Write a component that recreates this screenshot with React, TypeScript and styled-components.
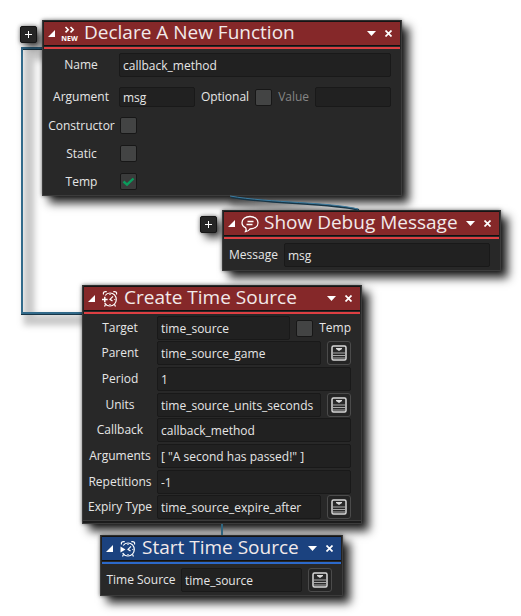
import React, { useId, useState } from 'react';
import styled, { createGlobalStyle } from 'styled-components';

const GlobalStyle = createGlobalStyle`
  *, *::before, *::after { box-sizing: border-box; }
  body {
    margin: 0;
    background: #ffffff;
    color: #e6e6e6;
    font: 12px/16px "Open Sans", "Noto Sans", sans-serif;
  }
  button, input { font: inherit; color: inherit; }
`;

type Tone = 'red' | 'blue';

const tones = {
  red: { fill: '#852829', line: '#dd3f42' },
  blue: { fill: '#1b427f', line: '#2c69ca' },
};

const Canvas = styled.main`
  position: relative;
  min-height: 100vh;
  overflow: hidden;
`;

const Wires = styled.svg`
  position: absolute;
  top: 0;
  left: 0;
  overflow: visible;
  pointer-events: none;
`;

const NodeFrame = styled.section<{ $x: number; $y: number; $width: number }>`
  position: absolute;
  left: ${(p) => p.$x}px;
  top: ${(p) => p.$y}px;
  width: ${(p) => p.$width}px;
  background: #282828;
  border: 1px solid #3b3b3b;
  border-top-color: #2c2e2e;
  box-shadow: 0 0 4px rgba(0, 0, 0, 0.55), 7px 7px 9px rgba(0, 0, 0, 0.85);
`;

const Header = styled.header<{ $tone: Tone }>`
  display: flex;
  align-items: center;
  height: 28px;
  padding-left: 4px;
  padding-right: 3px;
  background: linear-gradient(
    #141414 0 1px,
    ${(p) => tones[p.$tone].fill} 1px 24px,
    #101010 24px 25px,
    #282828 25px 26px,
    ${(p) => tones[p.$tone].line} 26px
  );
  border: 0 solid #222222;
  border-width: 0 1px;
`;

const Title = styled.h2`
  flex: 1;
  min-width: 0;
  margin: 0 0 6px 5px;
  color: #f2eaea;
  font-size: 19px;
  font-weight: 400;
  line-height: 22px;
  white-space: nowrap;
`;

const IconButton = styled.button<{ $width: number }>`
  display: grid;
  place-items: center;
  flex: none;
  width: ${(p) => p.$width}px;
  height: 23px;
  margin-bottom: 3px;
  padding: 0;
  border: 0;
  background: none;
`;

const NodeIcon = styled.span`
  display: grid;
  flex: none;
  width: 18px;
  height: 18px;
  margin: 0 0 2px 6px;
`;

const AddButton = styled.button<{ $x: number; $y: number }>`
  position: absolute;
  left: ${(p) => p.$x}px;
  top: ${(p) => p.$y}px;
  display: grid;
  place-items: center;
  width: 17px;
  height: 17px;
  padding: 0;
  border: 1px solid #161616;
  border-radius: 2px;
  background: #252525;
  box-shadow: 0 0 4px rgba(0, 0, 0, 0.5), 5px 5px 8px rgba(0, 0, 0, 0.7);
`;

const FunctionBody = styled.div`
  display: flex;
  flex-direction: column;
  gap: 10px;
  padding: 4px 10px 5px 0;
`;

const CheckList = styled.div`
  display: flex;
  flex-direction: column;
  gap: 11px;
`;

const SourceBody = styled.div`
  padding: 2px 10px 1px 0;
  border-bottom: 1px solid #3b3b3b;

  & > * + * { margin-top: 2px; }
  & > *:nth-child(3n + 2) { margin-top: 1px; }
`;

const FootBar = styled.div`
  height: 2px;
  background: #1c1c1c;
`;

const ShortBody = styled.div`
  padding: 4px 10px 3px 0;
`;

const Row = styled.div`
  display: flex;
  align-items: center;
  gap: 6px;
`;

const Label = styled.label<{ $width: number }>`
  flex: none;
  width: ${(p) => p.$width}px;
  margin-right: -6px;
  text-align: center;
`;

const InlineLabel = styled.label<{ $muted?: boolean }>`
  flex: none;
  color: ${(p) => (p.$muted ? '#858585' : '#e6e6e6')};
`;

const TextBox = styled.input<{ $short?: boolean }>`
  flex: 1;
  width: 0;
  min-width: 0;
  height: ${(p) => (p.$short ? 20 : 24)}px;
  padding: 0 3px;
  border: 1px solid #191919;
  border-radius: 2px;
  background: #212121;
  outline: 0;
`;

const CheckBox = styled.input`
  appearance: none;
  flex: none;
  width: 17px;
  height: 17px;
  margin: 0;
  border: 1px solid #171717;
  border-radius: 2px;
  background: #434444;

  &:checked {
    background: #3a3b3b;
  }
`;

const CheckHolder = styled.span`
  position: relative;
  display: grid;
  flex: none;

  svg {
    position: absolute;
    inset: 0;
    pointer-events: none;
  }
`;

const PickerButton = styled.button`
  display: grid;
  place-items: center;
  flex: none;
  width: 24px;
  height: 24px;
  padding: 0;
  border: 1px solid #4b4b4b;
  border-radius: 3px;
  background: #242424;
`;

function NewIcon() {
  return (
    <svg width="18" height="18" viewBox="0 0 18 18" aria-hidden="true">
      <path d="M4.500 2l2.700 2.700-2.700 2.700M9.500 2l2.700 2.700-2.700 2.700" fill="none" stroke="#fff" strokeWidth="1.600" />
      <text x="8.500" y="16" textAnchor="middle" fill="#fff" fontSize="7" fontWeight="700">NEW</text>
    </svg>
  );
}

function SpeechIcon() {
  return (
    <svg width="18" height="18" viewBox="0 0 18 18" fill="none" stroke="#fff" strokeWidth="1.300" aria-hidden="true">
      <path d="M4.500 12.600C2.200 11.500 1 9.700 1 7.700 1 4 4.500 1.500 9 1.500s8 2.500 8 6.200-3.500 6.100-8 6.300c-1 1.500-2.400 2.500-4.500 2.600.8-1.200.8-2.700 0-4z" />
      <path d="M6.500 6.500h6M5.500 9.500h6" />
    </svg>
  );
}

function ClockIcon({ sign }: { sign: 'plus' | 'play' }) {
  return (
    <svg width="18" height="18" viewBox="0 0 18 18" fill="none" stroke="#fff" strokeWidth="1.200" aria-hidden="true">
      <path d="M4.200 5.500C5.300 3.800 7 3 9 3c3.700 0 6.300 2.900 6.300 6.500S12.500 16 9 16c-2.300 0-4.200-1.100-5.300-3" />
      <path d="M2.500 4.500C1.800 2.500 3.500.9 5.800 1.800M12.200 1.800c2.300-.9 4 .7 3.300 2.700" />
      <path d="M12 6.300L9 9.300l2.500 1.700M9 4v1M9 14v1M13.300 9.500h1M4.500 14.500L3.500 16.500M13.500 14.500l1 2" />
      {sign === 'plus' ? (
        <path d="M1 9.500h5.600M3.800 6.700v5.600" strokeWidth="1.500" />
      ) : (
        <path d="M1.500 6.500l5 3-5 3z" fill="#fff" stroke="none" />
      )}
    </svg>
  );
}

function Picker({ label }: { label: string }) {
  return (
    <PickerButton type="button" aria-label={label}>
      <svg width="16" height="16" viewBox="0 0 16 16" aria-hidden="true">
        <rect x="1" y="1" width="14" height="14" rx="1.500" fill="#292929" stroke="#d8d8d8" strokeWidth="1.500" />
        <path d="M5 3h6v1L8 6 5 4z" fill="#d8d8d8" />
        <path d="M2 8h12M2 10.500h12M2 13h12" stroke="#a9a9a9" strokeWidth="1.200" />
      </svg>
    </PickerButton>
  );
}

function Check({ id, initial = false }: { id: string; initial?: boolean }) {
  const [on, setOn] = useState(initial);
  return (
    <CheckHolder>
      <CheckBox id={id} type="checkbox" checked={on} onChange={() => setOn(!on)} />
      {on && (
        <svg width="17" height="17" viewBox="0 0 17 17" aria-hidden="true">
          <path d="M3.500 8.500L7 11.700 13.500 5.500" fill="none" stroke="#0a9b5c" strokeWidth="2.400" />
        </svg>
      )}
    </CheckHolder>
  );
}

interface NodeProps {
  x: number;
  y: number;
  width: number;
  tone: Tone;
  title: string;
  icon: React.ReactNode;
  children: React.ReactNode;
}

function Node({ x, y, width, tone, title, icon, children }: NodeProps) {
  return (
    <NodeFrame $x={x} $y={y} $width={width}>
      <Header $tone={tone}>
        <IconButton type="button" $width={7} aria-label="Collapse">
          <svg width="7" height="7" aria-hidden="true"><path d="M7 0v7H0z" fill="#fff" /></svg>
        </IconButton>
        <NodeIcon>{icon}</NodeIcon>
        <Title>{title}</Title>
        <IconButton type="button" $width={17} aria-label="Options">
          <svg width="9" height="5" aria-hidden="true"><path d="M0 0h9L4.500 5z" fill="#fff" /></svg>
        </IconButton>
        <IconButton type="button" $width={17} aria-label="Close">
          <svg width="7" height="7" aria-hidden="true"><path d="M.5.5l6 6M6.500.5l-6 6" stroke="#fff" strokeWidth="1.700" /></svg>
        </IconButton>
      </Header>
      {children}
    </NodeFrame>
  );
}

interface FieldProps {
  label: string;
  value: string;
  labelWidth: number;
  picker?: boolean;
  children?: React.ReactNode;
}

function Field({ label, value, labelWidth, picker, children }: FieldProps) {
  const id = useId();
  return (
    <Row>
      <Label htmlFor={id} $width={labelWidth}>{label}</Label>
      <TextBox id={id} defaultValue={value} spellCheck={false} />
      {picker && <Picker label={`Choose ${label}`} />}
      {children}
    </Row>
  );
}

function CheckField({ label, checked }: { label: string; checked?: boolean }) {
  const id = useId();
  return (
    <Row>
      <Label htmlFor={id} $width={77}>{label}</Label>
      <Check id={id} initial={checked} />
    </Row>
  );
}

function Add({ x, y }: { x: number; y: number }) {
  return (
    <AddButton type="button" $x={x} $y={y} aria-label="Add block">
      <svg width="7" height="7" aria-hidden="true"><path d="M0 3.500h7M3.500 0v7" stroke="#fff" /></svg>
    </AddButton>
  );
}

export default function App() {
  return (
    <Canvas>
      <GlobalStyle />
      <Wires width="1" height="1" aria-hidden="true">
        <defs>
          <filter id="soft" filterUnits="userSpaceOnUse" x="0" y="0" width="420" height="560">
            <feGaussianBlur stdDeviation="3" />
          </filter>
        </defs>
        <path d="M90 320H29V55H50" fill="none" stroke="#000" strokeOpacity=".22" strokeWidth="11" filter="url(#soft)" />
        <path d="M82 314H22V49H42" fill="none" stroke="#173546" strokeWidth="2" />
        <path d="M82 313H22V48H42" fill="none" stroke="#336b8b" strokeWidth="2" />
        <path d="M230 202C270 209 335 211 365 221" fill="none" stroke="#000" strokeOpacity=".35" strokeWidth="6" filter="url(#soft)" />
      </Wires>
      <Add x={20} y={26} />
      <Add x={200} y={216} />

      <Node x={42} y={20} width={360} tone="red" title="Declare A New Function" icon={<NewIcon />}>
        <FunctionBody>
          <Field label="Name" value="callback_method" labelWidth={76} />
          <Row>
            <Label htmlFor="argument" $width={76}>Argument</Label>
            <TextBox id="argument" $short defaultValue="msg" spellCheck={false} />
            <InlineLabel htmlFor="optional">Optional</InlineLabel>
            <Check id="optional" />
            <InlineLabel htmlFor="value" $muted>Value</InlineLabel>
            <TextBox id="value" $short defaultValue="" />
          </Row>
          <CheckList>
            <CheckField label="Constructor" />
            <CheckField label="Static" />
            <CheckField label="Temp" checked />
          </CheckList>
        </FunctionBody>
      </Node>

      <Node x={222} y={210} width={279} tone="red" title="Show Debug Message" icon={<SpeechIcon />}>
        <ShortBody>
          <Field label="Message" value="msg" labelWidth={61} />
        </ShortBody>
      </Node>

      <Node x={82} y={285} width={280} tone="red" title="Create Time Source" icon={<ClockIcon sign="plus" />}>
        <SourceBody>
          <Field label="Target" value="time_source" labelWidth={74}>
            <Check id="source-temp" />
            <InlineLabel htmlFor="source-temp">Temp</InlineLabel>
          </Field>
          <Field label="Parent" value="time_source_game" labelWidth={74} picker />
          <Field label="Period" value="1" labelWidth={74} />
          <Field label="Units" value="time_source_units_seconds" labelWidth={74} picker />
          <Field label="Callback" value="callback_method" labelWidth={74} />
          <Field label="Arguments" value={'[ "A second has passed!" ]'} labelWidth={74} />
          <Field label="Repetitions" value="-1" labelWidth={74} />
          <Field label="Expiry Type" value="time_source_expire_after" labelWidth={74} picker />
        </SourceBody>
        <FootBar />
      </Node>

      <Node x={100} y={535} width={243} tone="blue" title="Start Time Source" icon={<ClockIcon sign="play" />}>
        <ShortBody>
          <Field label="Time Source" value="time_source" labelWidth={80} picker />
        </ShortBody>
      </Node>

      <Wires width="1" height="1" aria-hidden="true">
        <path d="M231 197C270 204 330 203 359 210" fill="none" stroke="#173546" strokeWidth="2" />
        <path d="M230 196C270 203 330 202 358 209" fill="none" stroke="#3d7ca0" strokeWidth="1" />
        <path d="M222 524V535" stroke="#2f657f" strokeWidth="2" />
      </Wires>
    </Canvas>
  );
}
